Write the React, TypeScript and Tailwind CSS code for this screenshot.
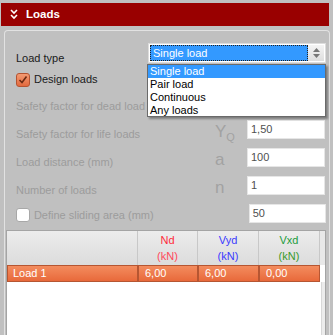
import React from "react";

const F = { fontFamily: '"Liberation Sans", Arial, sans-serif' };

function Input({ value }: { value: string }) {
  return (
    <div className="w-[78px] h-[19px] bg-white border border-[#e6e6e6] flex items-center pl-[3px] text-[11px] text-[#505050]">
      {value}
    </div>
  );
}

function FormRow({
  label,
  symbol,
  sub,
  value,
}: {
  label: string;
  symbol?: string;
  sub?: string;
  value: string;
}) {
  return (
    <div className="flex h-[19px] mt-[9px] items-start">
      <div className="w-[199px] pt-[8px] leading-[13px] text-[11px] text-[#9c9c9c] whitespace-nowrap">{label}</div>
      <div className="w-[32px] leading-[16px] text-[17px] text-[#a2a2a2] pt-[4px] whitespace-nowrap">
        {symbol}
        {sub && <span className="text-[11px] relative top-[4px]">{sub}</span>}
      </div>
      <Input value={value} />
    </div>
  );
}

export default function App() {
  return (
    <div style={F} className="w-[333px] h-[335px] bg-[#c0c0c0] overflow-hidden relative flex flex-col">
      {/* header */}
      <div className="mt-[3px] ml-[1px] w-[328px] h-[23px] bg-[#990000] flex items-center shrink-0">
        <svg width="8" height="11" viewBox="0 0 8 11" className="ml-[9px]">
          <path d="M1 1 L4 4 L7 1 M1 6 L4 9 L7 6" stroke="white" strokeWidth="1.6" fill="none" />
        </svg>
        <span className="ml-[8px] text-white font-bold text-[11.5px]">Loads</span>
      </div>
      {/* panel */}
      <div className="mt-[4px] ml-[4px] w-[326px] flex-1 border-l border-t border-r border-[#e2e2e2] rounded-t-[4px] flex flex-col">
        <div className="pl-[11px] pr-[3px]">
          {/* load type */}
          <div className="flex justify-between h-[20px] mt-[12px]">
            <div className="pt-[8px] leading-[14px] text-[11px] text-[#1a1a1a]">Load type</div>
            <div className="w-[178px] h-[20px] border border-[#dcdcdc] bg-white flex p-[1px]">
              <div className="flex-1 bg-[#3399ff] border border-dotted border-[#222] flex items-center pl-[2px] text-[11px] text-white">
                Single load
              </div>
              <div className="w-[16px] bg-gradient-to-b from-[#f4f4f4] to-[#dedede] flex flex-col items-center justify-center gap-[2px]">
                <svg width="7" height="4" viewBox="0 0 7 4"><path d="M0 4 L3.5 0 L7 4 Z" fill="#777" /></svg>
                <svg width="7" height="4" viewBox="0 0 7 4"><path d="M0 0 L3.5 4 L7 0 Z" fill="#777" /></svg>
              </div>
            </div>
          </div>
          {/* design loads */}
          <div className="flex items-center h-[15px] mt-[9px]">
            <div className="w-[14px] h-[14px] rounded-[3px] bg-gradient-to-b from-[#f39a72] to-[#e2693d] border border-[#b55330] flex items-center justify-center">
              <svg width="10" height="9" viewBox="0 0 10 9">
                <path d="M1.5 5 L4 7.5 L8.5 1.5" stroke="#6a2a12" strokeWidth="1.6" fill="none" />
              </svg>
            </div>
            <span className="ml-[4px] text-[11px] text-[#1a1a1a]">Design loads</span>
          </div>
          <div className="mt-[-4px]">
            <FormRow label="Safety factor for dead load" symbol="Y" sub="G" value="1,35" />
            <FormRow label="Safety factor for life loads" symbol="Y" sub="Q" value="1,50" />
            <FormRow label="Load distance (mm)" symbol="a" value="100" />
            <FormRow label="Number of loads" symbol="n" value="1" />
            <div className="flex h-[19px] mt-[9px] items-start">
              <div className="w-[14px] h-[14px] mt-[4px] rounded-[3px] bg-white border border-[#a8a8a8]" />
              <div className="w-[217px] ml-[4px] pt-[5px] leading-[13px] text-[11px] text-[#9c9c9c]">Define sliding area (mm)</div>
              <Input value="50" />
            </div>
          </div>
        </div>
        {/* table */}
        <div className="mt-[7px] ml-[1px] w-[320px] flex-1 bg-white border border-[#a4a4a4] border-b-0 flex flex-col">
          <div className="flex h-[34px] bg-gradient-to-b from-[#ececec] to-[#dcdcdc] text-[11px] leading-[16px]">
            <div className="w-[131px] border-r border-[#c8c8c8]" />
            <div className="w-[60px] border-r border-[#c8c8c8] flex flex-col items-center justify-center text-[#ff2a3a]">
              <span>Nd</span>
              <span className="text-[#ff4a5a]">(kN)</span>
            </div>
            <div className="w-[61px] border-r border-[#c8c8c8] flex flex-col items-center justify-center text-[#3a3aff]">
              <span>Vyd</span>
              <span>(kN)</span>
            </div>
            <div className="w-[61px] border-r border-[#c8c8c8] flex flex-col items-center justify-center text-[#1c9c3c]">
              <span>Vxd</span>
              <span className="text-[#3a9a2a]">(kN)</span>
            </div>
            <div className="flex-1 bg-[#e8e8e8]" />
          </div>
          <div className="flex h-[17px] text-white text-[11px]">
            {[
              ["Load 1", "w-[131px]", "pl-[5px]"],
              ["6,00", "w-[60px]", "pl-[6px]"],
              ["6,00", "w-[61px]", "pl-[6px]"],
              ["0,00", "w-[61px]", "pl-[6px]"],
            ].map(([t, w, p], i) => (
              <div
                key={i}
                className={`${w} ${p} h-[17px] bg-gradient-to-b from-[#f38c5e] to-[#e8693a] border border-[#b65632] flex items-center`}
              >
                {t}
              </div>
            ))}
            <div className="flex-1" />
          </div>
          <div className="flex-1 flex">
            <div className="flex-1" />
            <div className="w-[4px] bg-[#ececec] border-l border-[#d8d8d8]" />
          </div>
        </div>
      </div>
      {/* dropdown list */}
      <div className="absolute left-[147px] top-[64px] w-[179px] h-[53px] bg-white border border-[#6a6a6a] shadow-[2px_2px_2px_rgba(0,0,0,0.35)] text-[11px] leading-[13px] text-black">
        <div className="bg-[#3399ff] text-white pl-[2px] h-[13px]">Single load</div>
        <div className="pl-[2px] h-[13px]">Pair load</div>
        <div className="pl-[2px] h-[13px]">Continuous</div>
        <div className="pl-[2px] h-[13px]">Any loads</div>
      </div>
    </div>
  );
}
